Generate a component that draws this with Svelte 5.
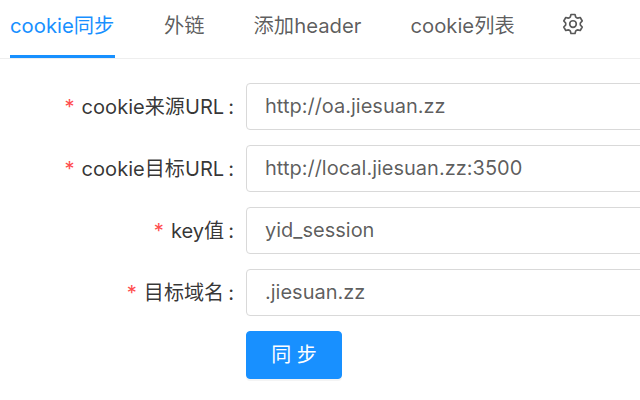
<script>
	const tabs = ['cookie同步', '外链', '添加header', 'cookie列表'];
	const fields = [
		{ label: 'cookie来源URL', value: 'http://oa.jiesuan.zz' },
		{ label: 'cookie目标URL', value: 'http://local.jiesuan.zz:3500' },
		{ label: 'key值', value: 'yid_session' },
		{ label: '目标域名', value: '.jiesuan.zz' }
	];

	// six rounded teeth round the centre of a 24 box
	const polar = (r, deg) => {
		const a = (deg * Math.PI) / 180;
		return `${(12 + r * Math.cos(a)).toFixed(2)} ${(12 + r * Math.sin(a)).toFixed(2)}`;
	};
	let gear = '';
	for (let k = 0; k < 6; k++) {
		const c = k * 60 - 90;
		gear += `${k ? 'L' : 'M'}${polar(8.2, c - 21)} L${polar(10.6, c - 12)} L${polar(10.6, c + 12)} L${polar(8.2, c + 21)} Q${polar(7.6, c + 30)} ${polar(8.2, c + 39)} `;
	}
	gear += 'Z';
</script>

<div class="page">
	<nav class="tabs">
		{#each tabs as tab, i}
			<div class="tab" class:active={i === 0}>{tab}</div>
		{/each}
		<div class="tab">
			<svg class="gear" viewBox="0 0 24 24" width="22" height="22" fill="none" stroke="currentColor" stroke-width="1.8" stroke-linejoin="round">
				<path d={gear} />
				<circle cx="12" cy="12" r="3.6" />
			</svg>
		</div>
	</nav>

	<form class="form">
		{#each fields as field}
			<div class="row">
				<label class="label"><span class="star">*</span>{field.label}<span class="colon">:</span></label>
				<input class="input" value={field.value} />
			</div>
		{/each}
		<div class="row">
			<div class="label"></div>
			<button type="button" class="btn">同 步</button>
		</div>
	</form>
</div>

<style>
	:global(body) {
		margin: 0;
		background: #fff;
		overflow: hidden;
	}

	.page {
		width: 640px;
		height: 400px;
		overflow: hidden;
		font-family: Inter, "Noto Sans CJK SC", sans-serif;
		font-size: 20px;
		color: rgba(0, 0, 0, 0.65);
	}

	.tabs {
		display: flex;
		gap: 49px;
		height: 58px;
		padding-left: 10px;
		border-bottom: 1px solid #eee;
		font-size: 20.3px;
	}

	.tab {
		height: 58px;
		line-height: 52px;
		box-sizing: border-box;
		white-space: nowrap;
	}

	.tab.active {
		color: #1890ff;
		border-bottom: 3px solid #1890ff;
		min-width: 105px;
	}

	.gear {
		vertical-align: middle;
		margin-top: -6px;
		margin-left: -2px;
	}

	.form {
		display: flex;
		flex-direction: column;
		gap: 15px;
		padding-top: 24px;
	}

	.row {
		display: flex;
		align-items: center;
		gap: 10px;
		width: 760px;
	}

	.label {
		width: 236px;
		padding-bottom: 3px;
		font-size: 20.1px;
		text-align: right;
		color: rgba(0, 0, 0, 0.8);
		white-space: nowrap;
	}

	.star {
		color: #ff4d4f;
		margin-right: 7px;
	}

	.colon {
		margin-left: 4px;
		margin-right: 2px;
	}

	.input {
		flex: 1;
		height: 47px;
		box-sizing: border-box;
		padding: 0 18px 1px;
		border: 1px solid #d9d9d9;
		border-radius: 4px;
		font: inherit;
		color: rgba(0, 0, 0, 0.65);
		background: #fff;
		outline: none;
	}

	.btn {
		width: 96px;
		height: 48px;
		padding-bottom: 4px;
		border: 1px solid #1890ff;
		border-radius: 4px;
		background: #1890ff;
		color: #fff;
		font: inherit;
		box-shadow: 0 2px 0 rgba(0, 0, 0, 0.045);
	}
</style>
